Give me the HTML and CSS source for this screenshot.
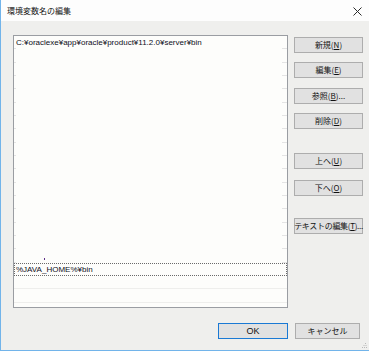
FILE: index.html
```html
<!DOCTYPE html>
<html lang="ja">
<head>
<meta charset="utf-8">
<title>環境変数名の編集</title>
<link rel="stylesheet" href="styles.css">
</head>
<body>
<div class="window">
  <div class="titlebar">
    <span class="title">環境変数名の編集</span>
    <svg class="close" width="9" height="9" viewBox="0 0 9 9"><path d="M0.5 0.5 L8.5 8.5 M8.5 0.5 L0.5 8.5" stroke="#2b2b2b" stroke-width="1" fill="none"/></svg>
  </div>
  <div class="content">
    <div class="main">
      <div class="list">
        <div class="row">C:¥oraclexe¥app¥oracle¥product¥11.2.0¥server¥bin</div>
        <div class="row"></div>
        <div class="row"></div>
        <div class="row"></div>
        <div class="row"></div>
        <div class="row"></div>
        <div class="row"></div>
        <div class="row"></div>
        <div class="row"></div>
        <div class="row"></div>
        <div class="row"></div>
        <div class="row"></div>
        <div class="row"></div>
        <div class="row"></div>
        <div class="row"></div>
        <div class="row"></div>
        <div class="row"><span class="mark"></span></div>
        <div class="row selected">%JAVA_HOME%¥bin</div>
        <div class="row after"></div>
        <div class="row after"></div>
      </div>
      <div class="side">
        <button class="btn">新規(<u>N</u>)</button>
        <button class="btn">編集(<u>E</u>)</button>
        <button class="btn">参照(<u>B</u>)...</button>
        <button class="btn">削除(<u>D</u>)</button>
        <button class="btn group">上へ(<u>U</u>)</button>
        <button class="btn down">下へ(<u>O</u>)</button>
        <button class="btn text">テキストの編集(<u>T</u>)...</button>
      </div>
    </div>
    <div class="footer">
      <button class="btn ok">OK</button>
      <button class="btn cancel">キャンセル</button>
    </div>
  </div>
  <svg class="grip" width="5" height="5" viewBox="0 0 5 5"><rect x="3" y="0" width="1" height="1" fill="#b8b8b8"/><rect x="1.5" y="2" width="1" height="1" fill="#b8b8b8"/><rect x="3.5" y="2" width="1" height="1" fill="#b8b8b8"/><rect x="0" y="4" width="1" height="1" fill="#b8b8b8"/><rect x="2" y="4" width="1" height="1" fill="#b8b8b8"/><rect x="4" y="4" width="1" height="1" fill="#b8b8b8"/></svg>
</div>
</body>
</html>
```
FILE: styles.css
```css
html, body {
  margin: 0;
  padding: 0;
  background: #f0f0f0;
}
.window {
  position: relative;
  width: 369px;
  height: 351px;
  box-sizing: border-box;
  border-left: 1px solid #72b4ea;
  border-bottom: 1px solid #72b4ea;
  background: #efefed;
  display: flex;
  flex-direction: column;
  font-family: "Noto Sans CJK JP", "Liberation Sans", sans-serif;
  font-size: 8px;
  color: #111;
}
.titlebar {
  height: 21px;
  background: #fdfdfd;
  display: flex;
  align-items: center;
  justify-content: space-between;
  padding: 0 7px 0 6px;
}
.title {
  font-size: 8px;
  line-height: 10px;
  color: #111;
}
.close {
  display: block;
  margin-top: 1px;
}
.content {
  padding: 14px 0 0 12px;
  display: flex;
  flex-direction: column;
}
.main {
  display: flex;
  align-items: flex-start;
}
.list {
  width: 275px;
  height: 273px;
  box-sizing: border-box;
  border: 1px solid #9a9da2;
  background: #fdfdfb;
  display: flex;
  flex-direction: column;
  padding-top: 0;
}
.row {
  height: 13.333px;
  flex: none;
  box-sizing: border-box;
  padding-left: 2px;
  font-family: "Liberation Sans", Arial, sans-serif;
  font-size: 8px;
  line-height: 13px;
  color: #0d0d1a;
  white-space: nowrap;
  background:
    linear-gradient(#e4e4e4, #e4e4e4) left bottom / 2px 1px no-repeat,
    linear-gradient(#e4e4e4, #e4e4e4) right bottom / 5px 1px no-repeat;
}
.row.selected {
  border: 1px dotted #6a6a6a;
  line-height: 11px;
  padding-left: 1px;
  background: none;
}
.row.after {
  background: linear-gradient(#eeeeec, #eeeeec) left bottom / 100% 1px no-repeat;
}
.mark {
  display: block;
  width: 1px;
  height: 2px;
  margin: 9px 0 0 28px;
  background: #5b2b86;
}
.side {
  display: flex;
  flex-direction: column;
  margin-left: 6px;
  padding-top: 2px;
  gap: 9.4px;
}
.btn {
  width: 69px;
  height: 16px;
  box-sizing: border-box;
  border: 1px solid #adadad;
  background: #e1e1e1;
  font-family: "Noto Sans CJK JP", "Liberation Sans", sans-serif;
  font-size: 8px;
  line-height: 12px;
  color: #111;
  padding: 0;
  margin: 0;
  white-space: nowrap;
  display: flex;
  align-items: center;
  justify-content: center;
}
.btn u {
  text-underline-offset: 1px;
}
.btn.group {
  margin-top: 14.4px;
}
.btn.down {
  margin-top: 1.6px;
}
.btn.text {
  margin-top: 12.6px;
  letter-spacing: -0.3px;
}
.footer {
  display: flex;
  gap: 7px;
  margin-top: 15px;
  padding-left: 205px;
}
.btn.ok {
  width: 70px;
  border-color: #1a79d4;
  font-family: "Liberation Sans", Arial, sans-serif;
  font-size: 9px;
}
.btn.cancel {
  width: 65px;
}
.grip {
  position: absolute;
  right: 2px;
  bottom: 2px;
}
```
